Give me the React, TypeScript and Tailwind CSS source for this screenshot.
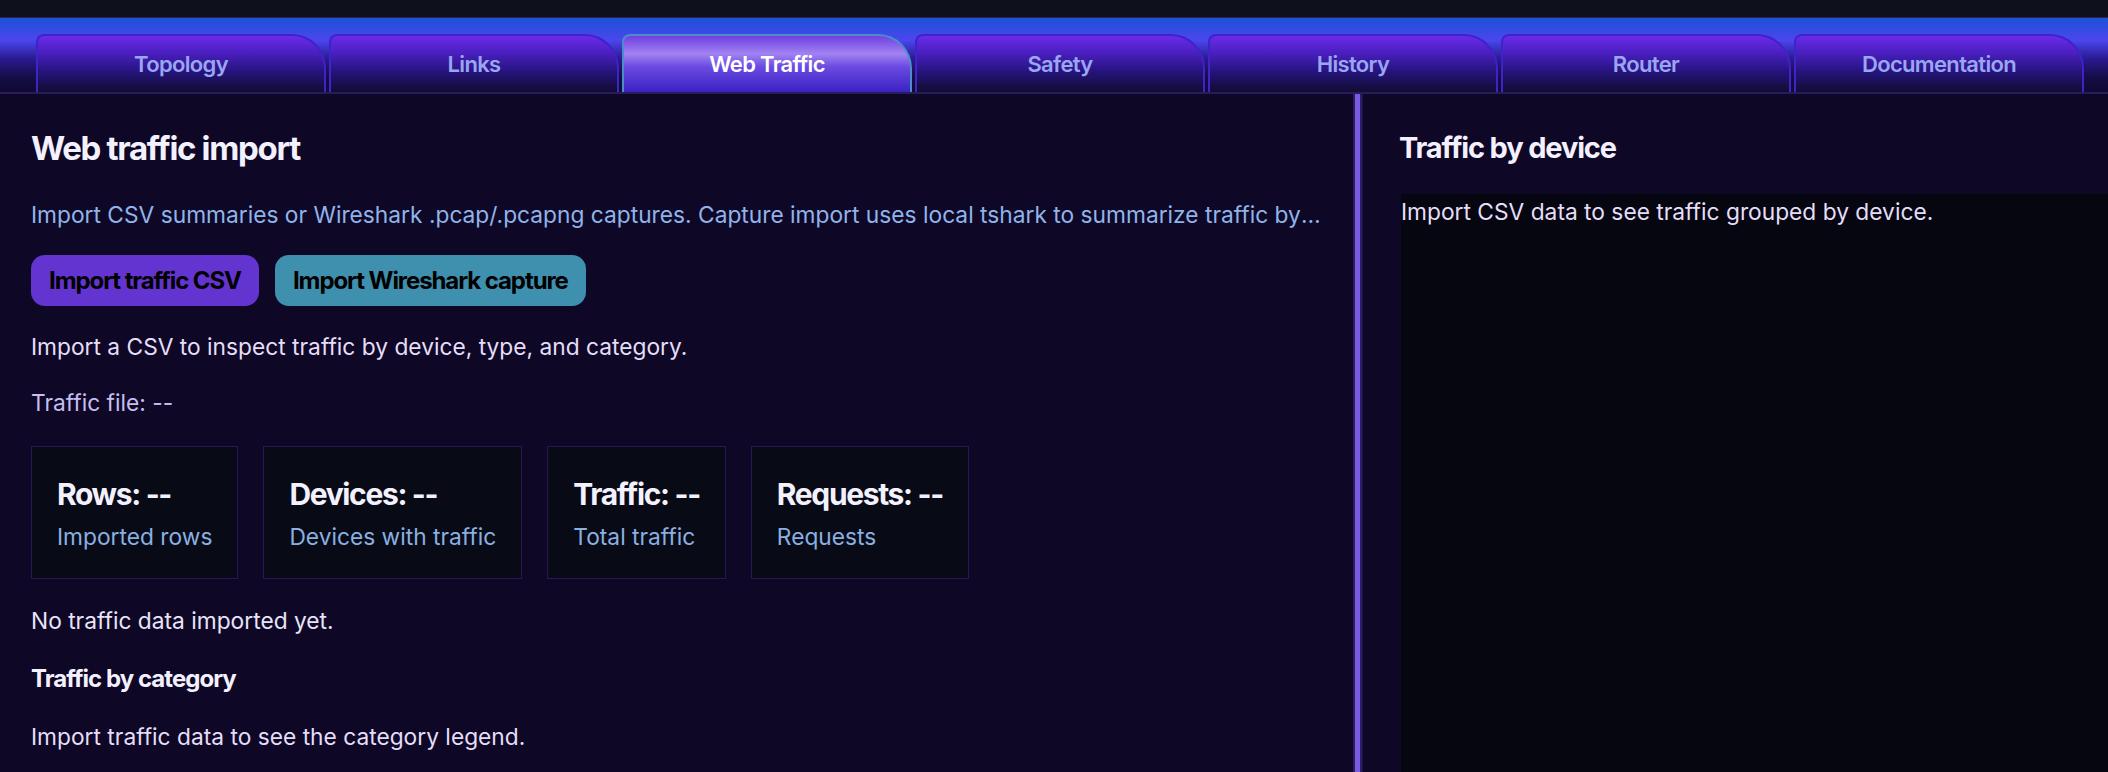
import React from 'react';

const tabs = ['Topology', 'Links', 'Web Traffic', 'Safety', 'History', 'Router', 'Documentation'];

const stats = [
  { title: 'Rows: --', sub: 'Imported rows' },
  { title: 'Devices: --', sub: 'Devices with traffic' },
  { title: 'Traffic: --', sub: 'Total traffic' },
  { title: 'Requests: --', sub: 'Requests' },
];

const App: React.FC = () => {
  return (
    <div className="h-[772px] w-[2108px] overflow-hidden bg-[#0f0726] font-['Inter',sans-serif] flex flex-col">
      <div className="h-[18px] shrink-0 bg-[#0e111c] border-b border-[#262848]" />

      {/* tab bar */}
      <nav className="h-[76px] shrink-0 flex items-end gap-[3px] pl-[36px] border-b-2 border-[#2a1a5e] bg-[linear-gradient(180deg,#1d52d6_0%,#4b46ee_30%,#2a1a92_55%,#150d45_80%,#100a32_100%)]">
        {tabs.map((t) => {
          const active = t === 'Web Traffic';
          return (
            <div
              key={t}
              className={
                active
                  ? 'w-[290px] h-[58px] flex items-center justify-center rounded-tl-[8px] rounded-tr-[34px] border-2 border-b-0 border-[#4a8ec8] bg-[linear-gradient(180deg,#6f3fe0_0%,#a283f2_32%,#6b4ae2_55%,#3a22c2_100%)] text-white text-[22px] font-semibold tracking-[-0.03em]'
                  : 'w-[290px] h-[58px] flex items-center justify-center rounded-tl-[8px] rounded-tr-[34px] border-2 border-b-0 border-[#3f22c8] bg-[linear-gradient(180deg,#6a2bea_0%,#4a1fc0_30%,#24137a_65%,#120c30_100%)] text-[#9aa6f2] text-[22px] font-semibold tracking-[-0.03em]'
              }
            >
              {t}
            </div>
          );
        })}
      </nav>

      <div className="flex flex-1 min-h-0">
        {/* left panel */}
        <section className="w-[1353px] shrink-0 px-[31px] pt-[34px] flex flex-col text-[22.75px] leading-[32px]">
          <h1 className="text-[33px] leading-[40px] font-bold text-[#f4f1ff] tracking-[-0.04em]">Web traffic import</h1>
          <p className="mt-[31px] text-[#8fb4ea] truncate">
            Import CSV summaries or Wireshark .pcap/.pcapng captures. Capture import uses local tshark to summarize traffic by device, type, and category without uploading anything.
          </p>
          <div className="mt-[24px] flex gap-[16px]">
            <button className="h-[51px] px-[18px] rounded-[14px] bg-[#6434d0] text-black font-bold text-[24px] tracking-[-0.045em]">Import traffic CSV</button>
            <button className="h-[51px] px-[18px] rounded-[14px] bg-[#3f8fae] text-black font-bold text-[24px] tracking-[-0.045em]">Import Wireshark capture</button>
          </div>
          <p className="mt-[25px] text-[#e4def8]">Import a CSV to inspect traffic by device, type, and category.</p>
          <p className="mt-[24px] text-[#c6bfee]">Traffic file: --</p>
          <div className="mt-[27px] flex gap-[25px]">
            {stats.map((s) => (
              <div key={s.title} className="border border-[#2a1558] bg-[#080a16] px-[25px] pt-[27px] pb-[25px]">
                <div className="text-[30px] leading-[40px] font-bold text-[#f4f1ff] tracking-[-0.045em]">{s.title}</div>
                <div className="mt-[7px] text-[#8ab0e0]">{s.sub}</div>
              </div>
            ))}
          </div>
          <p className="mt-[26px] text-[#e8e4f8]">No traffic data imported yet.</p>
          <h3 className="mt-[26px] text-[24px] font-bold text-[#f4f1ff] tracking-[-0.04em]">Traffic by category</h3>
          <p className="mt-[26px] text-[#e4def8]">Import traffic data to see the category legend.</p>
        </section>

        {/* divider */}
        <div className="w-[9px] shrink-0 border-x-[2px] border-[#2c1c66] bg-[#7a5ae0]" />

        {/* right panel */}
        <section className="flex-1 min-w-0 pl-[36px] pt-[34px] flex flex-col border-l border-[#1e1244]">
          <h2 className="text-[29px] leading-[40px] font-bold text-[#f4f1ff] tracking-[-0.04em]">Traffic by device</h2>
          <div className="mt-[26px] ml-[2px] flex-1 bg-[#05060f] pt-[2px] text-[22.75px] leading-[32px] text-[#e4def8]">
            Import CSV data to see traffic grouped by device.
          </div>
        </section>
      </div>
    </div>
  );
};

export default App;
